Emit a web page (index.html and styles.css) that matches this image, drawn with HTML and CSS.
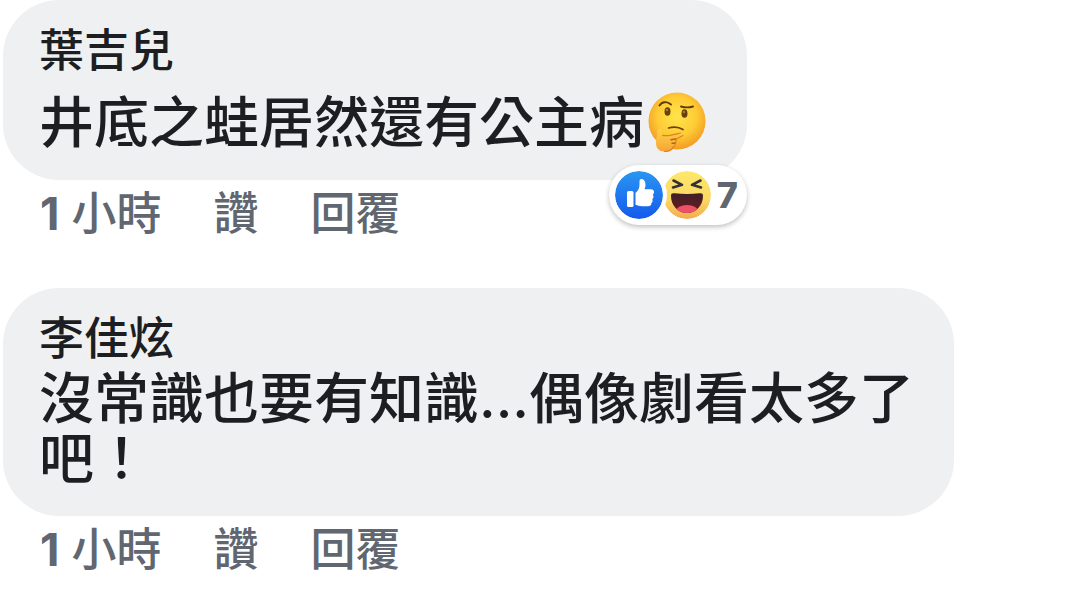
FILE: index.html
```html
<!DOCTYPE html>
<html lang="zh-Hant">
<head>
    <meta charset="UTF-8">
    <meta name="viewport" content="width=device-width, initial-scale=1.0">
    <title>留言</title>
    <link rel="stylesheet" href="styles.css">
</head>
<body>

<main class="comments">
    <article class="comment">
        <div class="bubble">
            <h3 class="author">葉吉兒</h3>
            <p class="text">井底之蛙居然還有公主病<svg class="emoji" viewBox="0 0 60 60" aria-hidden="true">
                <defs>
                    <radialGradient id="face" cx="50%" cy="42%" r="58%">
                        <stop offset="0" stop-color="#ffe54a"/>
                        <stop offset="0.6" stop-color="#fecb35"/>
                        <stop offset="1" stop-color="#f39a22"/>
                    </radialGradient>
                    <linearGradient id="hand" x1="0" y1="0" x2="0" y2="1">
                        <stop offset="0" stop-color="#ffd44a"/>
                        <stop offset="1" stop-color="#f6a436"/>
                    </linearGradient>
                </defs>
                <circle cx="30" cy="29" r="28.5" fill="url(#face)"/>
                <ellipse cx="20.5" cy="19.5" rx="3" ry="4.3" fill="#68400d"/>
                <ellipse cx="37.5" cy="21.5" rx="3" ry="4.3" fill="#68400d"/>
                <circle cx="20" cy="18" r="1.2" fill="#a87a35"/>
                <circle cx="37" cy="20" r="1.2" fill="#a87a35"/>
                <path d="M12.5 13.5C15 9.5 20 9 24 12.5M34 14.5C38 15.7 42 15.7 46 14.5" fill="none" stroke="#60390b" stroke-width="1.9" stroke-linecap="round"/>
                <path d="M21.5 36C26.5 34.5 32 35 36 37.5" fill="none" stroke="#704006" stroke-width="1.7" stroke-linecap="round"/>
                <path d="M12 37C14 36 15.5 38 15.5 41V43.5C21 44.5 27 42.5 33.5 41C37 40.7 37.5 44 34.5 45L28.5 47.5C29.5 48.5 29 50 28 51C28.5 53 27.5 54.5 26 55C25 58 21.5 59.5 17.5 59.5C11 59.5 8.5 55 9 49C9 46 11 43 10.5 40C10.3 38.5 11 37.3 12 37Z" fill="url(#hand)"/>
                <path d="M15.5 43.5C21 44.5 27 42.5 33.5 41M36 43.5L28.5 47.5C29.5 48.5 29 50 28 51C28.5 53 27.5 54.5 26 55C25 58 21.5 59.5 17.5 59.5" fill="none" stroke="#dd8420" stroke-width="1.2" stroke-linecap="round"/>
                <path d="M24 47.8L28.5 47M25 51.3H28" fill="none" stroke="#b9620f" stroke-width="1.4" stroke-linecap="round"/>
            </svg></p>
            <button type="button" class="reactions" aria-label="7 個心情">
                <svg class="reaction like" viewBox="0 0 48 48" aria-hidden="true">
                    <defs>
                        <linearGradient id="blue" x1="0" y1="0" x2="0" y2="1">
                            <stop offset="0" stop-color="#2997f1"/>
                            <stop offset="1" stop-color="#1559ed"/>
                        </linearGradient>
                    </defs>
                    <circle cx="24" cy="24" r="24" fill="url(#blue)"/>
                    <rect x="12" y="20" width="6.5" height="16" rx="1.5" fill="#fff"/>
                    <path d="M20.5 22C23.5 19.5 24.5 17 24.5 13V10Q24.5 8 26.3 8C29 8 30.5 10.5 30.5 13.5C30.5 15.5 30 17 29.5 18.3H36C38 18.3 39 19.5 39 21C39 22 38.6 23 37.8 23.5C39 25.5 38.6 27 37.3 28C38 29.8 37.5 31.3 36.3 32.2C36.6 34.5 35 35.2 33 35.2H27C24.5 35.2 22.5 34.7 20.5 33.8Z" fill="#fff"/>
                </svg>
                <svg class="reaction haha" viewBox="0 0 48 48" aria-hidden="true">
                    <defs>
                        <linearGradient id="yellow" x1="0" y1="0" x2="0" y2="1">
                            <stop offset="0" stop-color="#fde86b"/>
                            <stop offset="0.6" stop-color="#fbd863"/>
                            <stop offset="1" stop-color="#f2ac4e"/>
                        </linearGradient>
                        <linearGradient id="mouth" x1="0" y1="0" x2="0" y2="1">
                            <stop offset="0" stop-color="#3d2027"/>
                            <stop offset="1" stop-color="#6c1b20"/>
                        </linearGradient>
                        <clipPath id="mouth-clip">
                            <path d="M8 25C8 22.5 9 22 11.5 22.2C20 23.3 28 23.3 36.5 22.2C39 22 40 22.5 40 25C40 34.5 33 42 24 42S8 34.5 8 25Z"/>
                        </clipPath>
                    </defs>
                    <circle cx="24" cy="24" r="24" fill="url(#yellow)"/>
                    <g clip-path="url(#mouth-clip)">
                        <rect x="8" y="21" width="32" height="22" fill="url(#mouth)"/>
                        <ellipse cx="24" cy="40" rx="11" ry="6" fill="#ed5167"/>
                    </g>
                    <path d="M10.5 9.5L19 13.8L10 16.5M37.5 9.5L29 13.8L38 16.5" fill="none" stroke="#34313a" stroke-width="2.6" stroke-linecap="round" stroke-linejoin="round"/>
                </svg>
                <span class="count">7</span>
            </button>
        </div>
        <div class="actions">
            <a href="#" class="action"><b>1</b> 小時</a>
            <button type="button" class="action">讚</button>
            <button type="button" class="action">回覆</button>
        </div>
    </article>

    <article class="comment">
        <div class="bubble">
            <h3 class="author">李佳炫</h3>
            <p class="text">沒常識也要有知識...偶像劇看太多了吧！</p>
        </div>
        <div class="actions">
            <a href="#" class="action"><b>1</b> 小時</a>
            <button type="button" class="action">讚</button>
            <button type="button" class="action">回覆</button>
        </div>
    </article>
</main>

</body>
</html>
```

FILE: styles.css
```css
body {
    margin: 0;
    background-color: #fff;
    color: #1c1e21;
    font-family: Inter, "Noto Sans CJK TC", sans-serif;
    font-weight: 500;
}
b {
    font-weight: 700;
}
button {
    padding: 0;
    border: none;
    background: none;
    font: inherit;
    color: inherit;
    cursor: pointer;
}
.comments {
    display: flex;
    flex-direction: column;
    gap: 40px;
    padding: 0 3px;
}
.comment {
    display: flex;
    flex-direction: column;
    align-items: flex-start;
}
.bubble {
    position: relative;
    box-sizing: border-box;
    max-width: 951px;
    padding: 22px 36px 28px;
    border-radius: 56px;
    background-color: #eff0f2;
}
.author {
    margin: 0;
    font-size: 45px;
    font-weight: 500;
    line-height: 58px;
}
.text {
    margin: 0;
    font-size: 55px;
    line-height: 60px;
}
.emoji {
    width: 60px;
    height: 60px;
    margin: 12px 4px 0 3px;
    vertical-align: -10px;
}
.reactions {
    position: absolute;
    right: 0;
    bottom: -45px;
    display: flex;
    align-items: center;
    height: 60px;
    padding: 0 9px 0 6px;
    border-radius: 30px;
    background-color: #fff;
    box-shadow: 0 2px 5px rgba(0, 0, 0, 0.25);
}
.reaction {
    width: 48px;
    height: 48px;
    border-radius: 50%;
}
.like {
    z-index: 1;
    box-shadow: 0 0 0 4px #fff;
}
.count {
    margin-left: 6px;
    color: #606770;
    font-size: 36px;
    font-weight: 800;
}
.actions {
    display: flex;
    gap: 52px;
    padding-left: 37px;
    color: #606770;
    font-size: 45px;
    line-height: 68px;
}
.action {
    color: inherit;
    text-decoration: none;
}
.action:hover {
    text-decoration: underline;
}
```
